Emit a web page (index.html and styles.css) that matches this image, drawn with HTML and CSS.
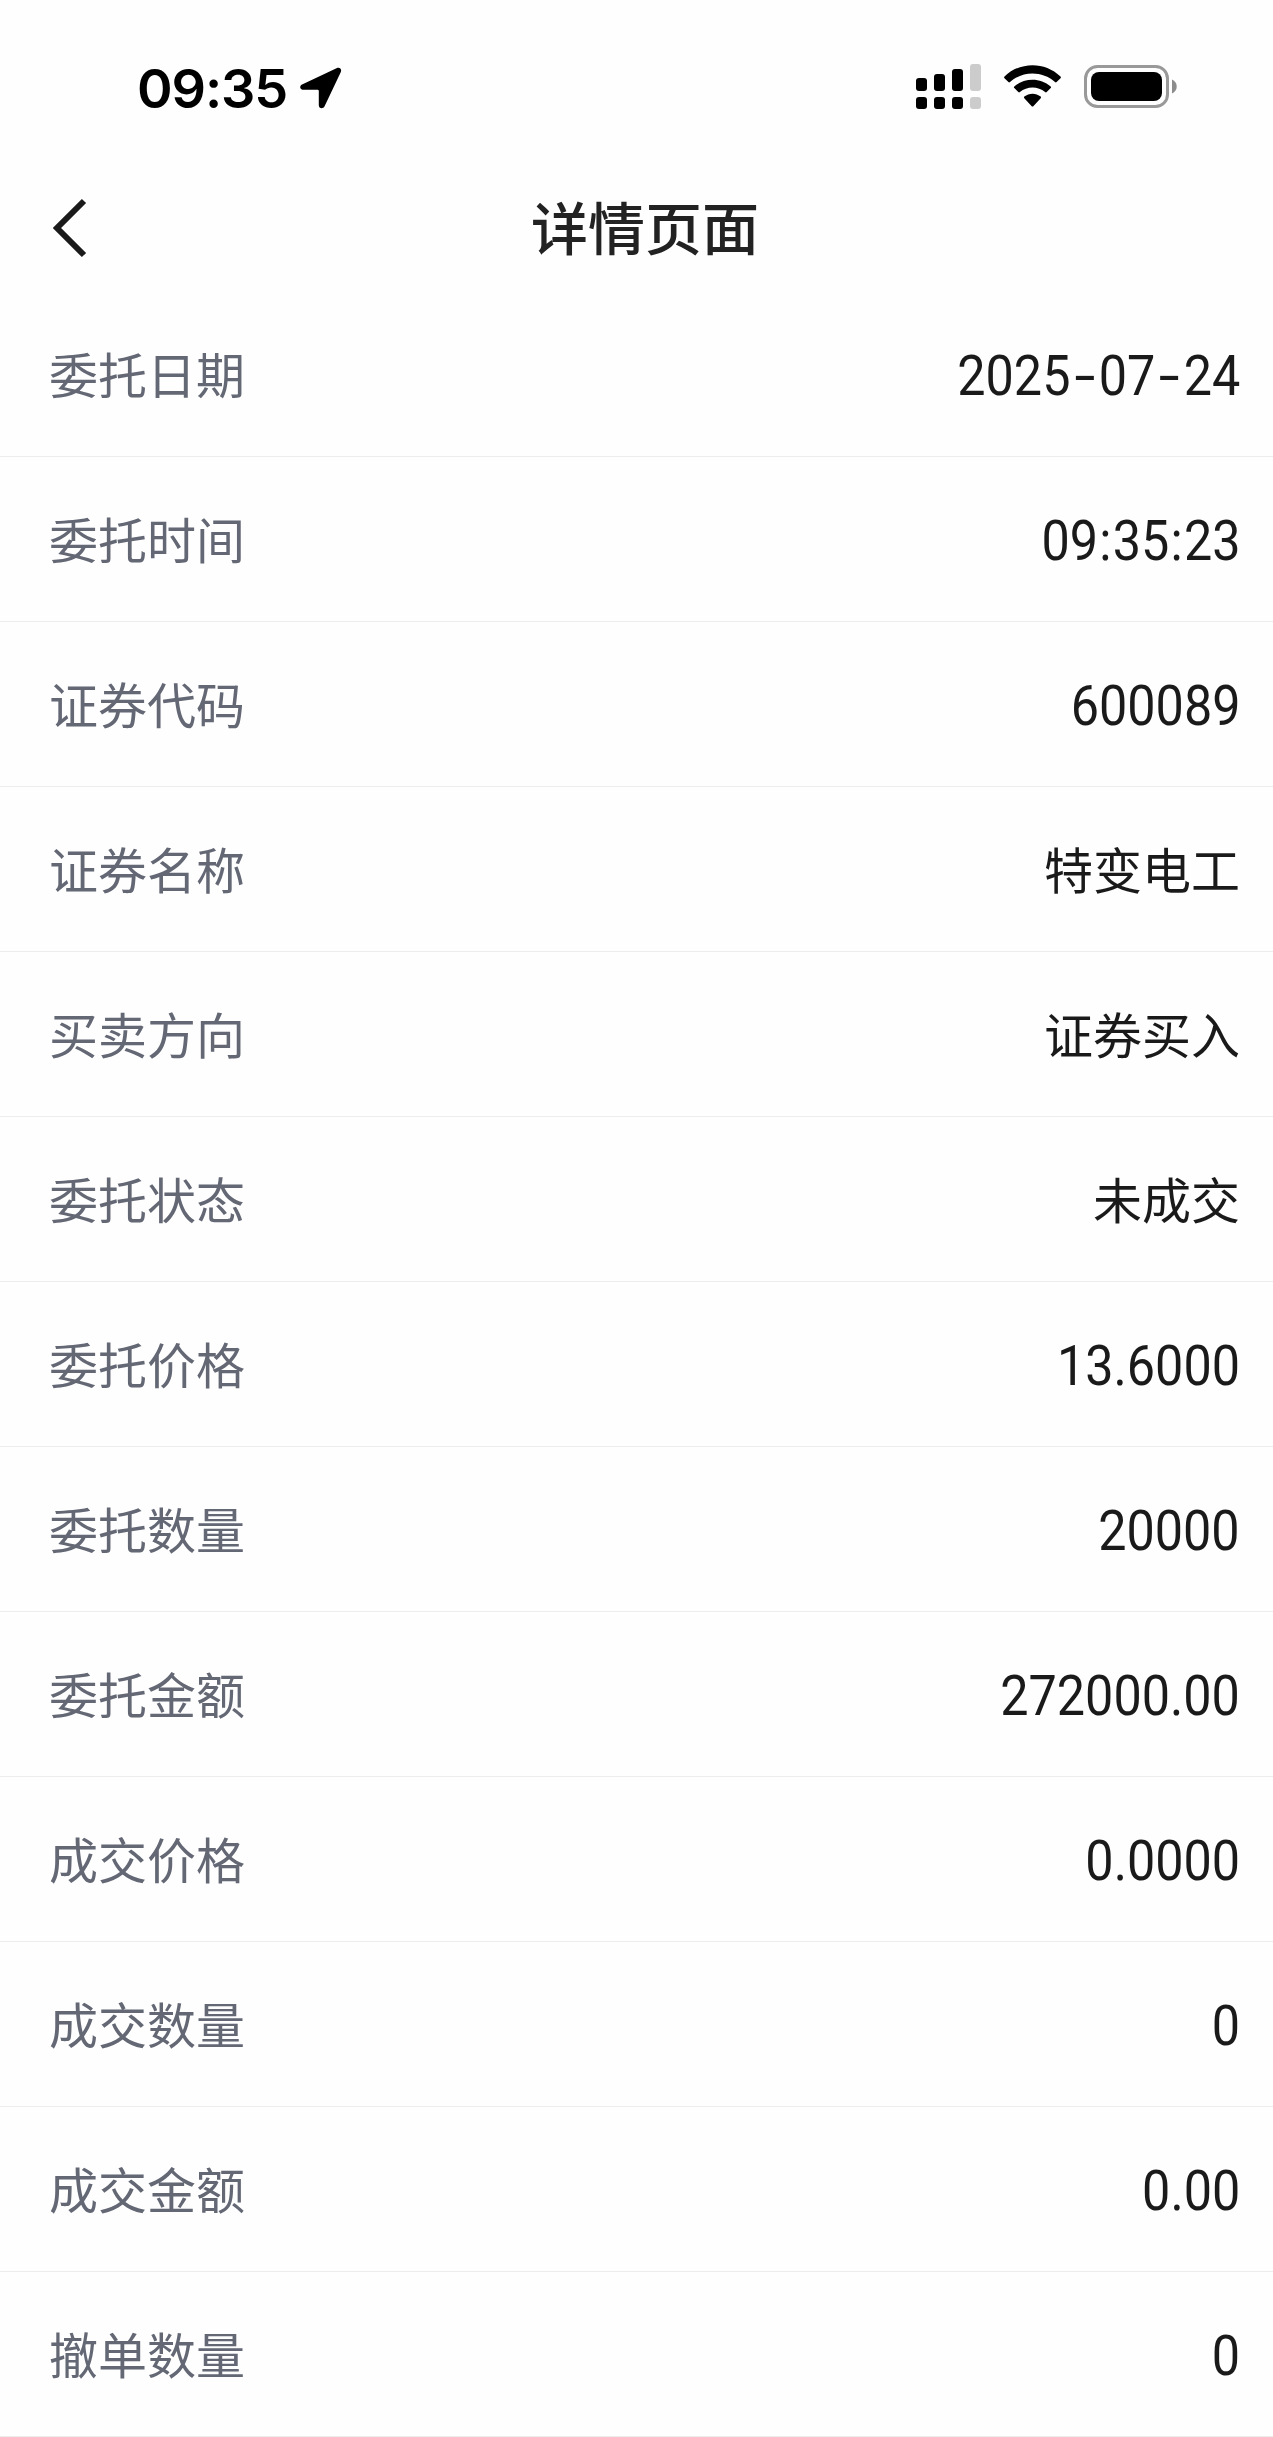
FILE: index.html
```html
<!DOCTYPE html>
<html lang="zh-CN">
<head>
    <meta charset="UTF-8">
    <meta name="viewport" content="width=device-width, initial-scale=1.0">
    <title>详情页面</title>
    <link rel="stylesheet" href="styles.css">
</head>
<body>
    <!-- Status Bar -->
    <div class="status-bar">
        <div class="status-left">
            <span class="clock">09:35</span>
            <svg class="location" width="42" height="42" viewBox="0 0 42 42">
                <path d="M2.6 17.2 36.5 1.2C40 -.3 42.2 2.400 40.600 5.600L24.700 39C23.200 42.400 18.800 41.700 18.800 38.200V24Q18.800 22.800 17.600 22.800H3.800C-.3 22.800 -1.200 18.900 2.600 17.200Z"/>
            </svg>
        </div>
        <div class="status-right">
            <svg class="signal" width="65" height="46" viewBox="0 0 65 46">
                <rect x="0" y="14" width="11" height="13" rx="3"/>
                <rect x="18" y="10" width="11" height="17" rx="3"/>
                <rect x="36" y="5" width="11" height="22" rx="3"/>
                <rect class="off" x="54" y="0" width="11" height="27" rx="3"/>
                <rect x="0" y="33" width="11" height="12" rx="3"/>
                <rect x="18" y="33" width="11" height="12" rx="3"/>
                <rect x="36" y="33" width="11" height="12" rx="3"/>
                <rect class="off" x="54" y="33" width="11" height="12" rx="3"/>
            </svg>
            <svg class="wifi" width="57" height="43" viewBox="0 0 57 43">
                <path d="M.5 11.500C16-3.600 41-3.600 56.500 11.500Q57.300 12.400 56.500 13.200L52.600 17.100Q51.800 17.900 51 17.100C38.500 5.600 18.500 5.600 6 17.100Q5.200 17.900 4.400 17.100L.5 13.200Q-.3 12.400 .5 11.500Z"/>
                <path d="M10.300 21.500C20.500 12.500 36.500 12.500 46.700 21.500Q47.500 22.300 46.700 23.100L42.700 27.100Q41.900 27.900 41.100 27.100C34 21 23 21 15.900 27.100Q15.100 27.900 14.300 27.100L10.300 23.100Q9.500 22.300 10.300 21.500Z"/>
                <path d="M20.300 31.600C25 27.700 32 27.700 36.700 31.600Q37.500 32.400 36.700 33.200L29.300 41.200Q28.500 42 27.700 41.200L20.300 33.200Q19.500 32.400 20.300 31.600Z"/>
            </svg>
            <svg class="battery" width="93" height="43" viewBox="0 0 93 43">
                <rect class="shell" x="1.500" y="1.500" width="82" height="40" rx="12"/>
                <rect x="7" y="7" width="71" height="29" rx="8"/>
                <path class="cap" d="M88 14.500C94.300 17 94.300 26 88 28.500Z"/>
            </svg>
        </div>
    </div>
    <!-- Title Bar -->
    <header class="nav">
        <a class="back" href="#" aria-label="返回">
            <svg width="34" height="60" viewBox="0 0 34 60">
                <path d="M31 3 4 30 31 57"/>
            </svg>
        </a>
        <h1 class="title">详情页面</h1>
    </header>
    <!-- Order Details -->
    <ul class="list">
        <li class="row"><span class="label">委托日期</span><span class="num">2025<i class="dash">-</i>07<i class="dash">-</i>24</span></li>
        <li class="row"><span class="label">委托时间</span><span class="num">09<i class="colon">:</i>35<i class="colon">:</i>23</span></li>
        <li class="row"><span class="label">证券代码</span><span class="num">600089</span></li>
        <li class="row"><span class="label">证券名称</span><span class="text">特变电工</span></li>
        <li class="row"><span class="label">买卖方向</span><span class="text">证券买入</span></li>
        <li class="row"><span class="label">委托状态</span><span class="text">未成交</span></li>
        <li class="row"><span class="label">委托价格</span><span class="num">13.6000</span></li>
        <li class="row"><span class="label">委托数量</span><span class="num">20000</span></li>
        <li class="row"><span class="label">委托金额</span><span class="num">272000.00</span></li>
        <li class="row"><span class="label">成交价格</span><span class="num">0.0000</span></li>
        <li class="row"><span class="label">成交数量</span><span class="num">0</span></li>
        <li class="row"><span class="label">成交金额</span><span class="num">0.00</span></li>
        <li class="row"><span class="label">撤单数量</span><span class="num">0</span></li>
    </ul>
</body>
</html>
```
FILE: styles.css
```css
* {
    box-sizing: border-box;
}
body {
    margin: 0;
    background-color: #fefefe;
    color: #1a1a1a;
    font-family: "Noto Sans CJK SC", sans-serif;
}
svg {
    display: block;
}
/* Status Bar */
.status-bar {
    display: flex;
    justify-content: space-between;
    height: 174px;
    padding: 0 96px 0 137px;
    color: #000;
}
.status-left {
    display: flex;
    align-items: center;
    height: 176px;
}
.clock {
    width: 163px;
    padding-top: 1px;
    font-family: Inter, sans-serif;
    font-size: 54px;
    font-weight: 600;
    line-height: 60px;
    letter-spacing: -1.1px;
}
.status-right {
    display: flex;
    align-items: flex-start;
    padding-top: 65px;
}
.signal {
    margin: -1px 23px 0 0;
}
.signal .off {
    fill: #ccc;
}
.wifi {
    margin-right: 23px;
}
.battery .shell {
    fill: none;
    stroke: #999;
    stroke-width: 3;
}
.battery .cap {
    fill: #8c8c8c;
}
/* Title Bar */
.nav {
    display: grid;
    grid-template-columns: 140px 1fr 123px;
    align-items: center;
    height: 108px;
    margin-bottom: 10px;
}
.back {
    padding-left: 53px;
}
.back path {
    fill: none;
    stroke: #1a1a1a;
    stroke-width: 6;
}
.title {
    margin: 0;
    padding-bottom: 6px;
    color: #222;
    font-size: 57px;
    font-weight: 500;
    line-height: 102px;
    text-align: center;
}
/* Order Details */
.list {
    margin: 0;
    padding: 0;
    list-style: none;
}
.row {
    display: flex;
    align-items: center;
    justify-content: space-between;
    height: 165px;
    padding: 0 33px 0 49px;
    border-bottom: 1px solid #ededed;
    font-size: 49px;
    line-height: 72px;
}
.label, .text {
    padding-bottom: 3px;
}
.label {
    color: #646875;
}
/* narrow digits, squeezed towards the right edge */
.num {
    padding-top: 4px;
    font-family: Roboto, sans-serif;
    font-size: 55px;
    transform: scaleX(0.915);
    transform-origin: right center;
}
.dash, .colon {
    display: inline-block;
    font-style: normal;
    text-align: center;
}
.dash {
    width: 31px;
    transform: scaleX(1.5);
}
.colon {
    width: 16px;
}
```
